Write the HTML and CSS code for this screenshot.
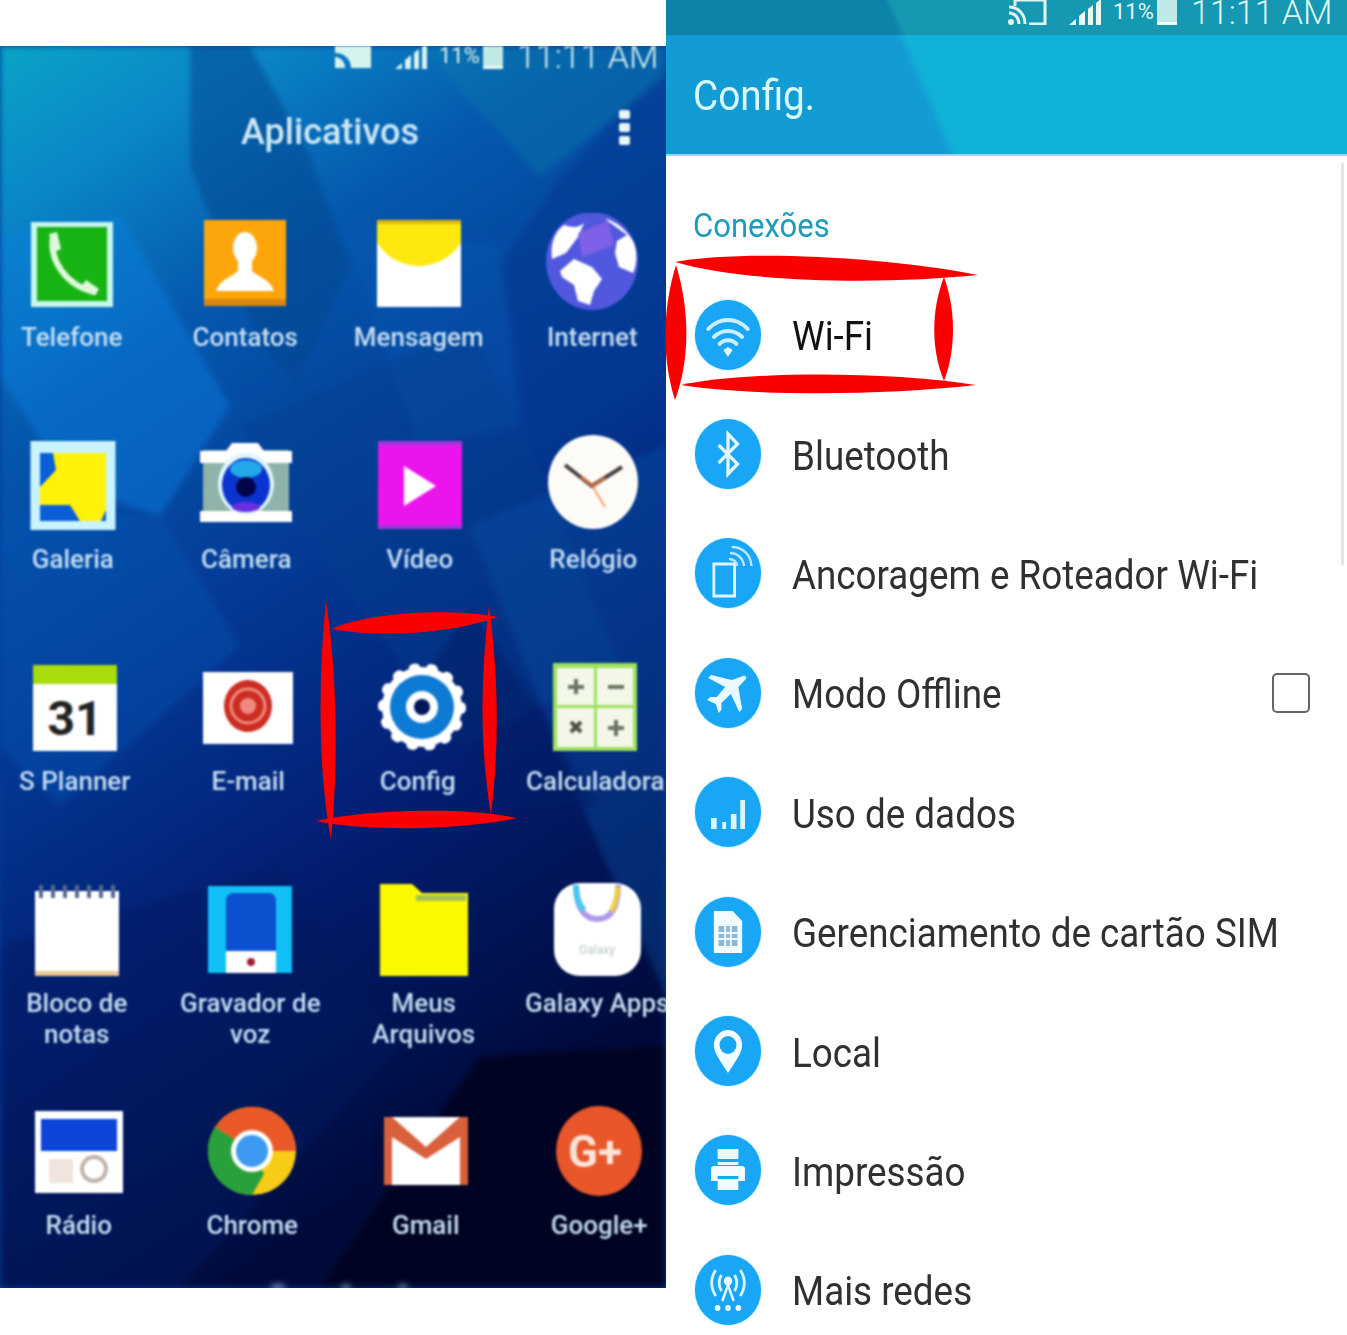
FILE: index.html
```html
<!DOCTYPE html>
<html lang="pt-BR">
<head>
<meta charset="utf-8">
<title>Config.</title>
<link rel="stylesheet" href="styles.css">
</head>
<body>
<div class="page">
  <section class="home">
    <svg class="wall" viewBox="0 0 666 1242" preserveAspectRatio="none" aria-hidden="true">
      <defs>
        <linearGradient id="wg" x1="0" y1="0" x2="0.35" y2="1">
          <stop offset="0" stop-color="#0aa4c6"/>
          <stop offset=".12" stop-color="#0a88c8"/>
          <stop offset=".28" stop-color="#0558ae"/>
          <stop offset=".5" stop-color="#043a96"/>
          <stop offset=".72" stop-color="#031f74"/>
          <stop offset="1" stop-color="#000a3a"/>
        </linearGradient>
      </defs>
      <rect width="666" height="1242" fill="url(#wg)"/>
      <polygon points="0,190 120,170 230,360 160,470 70,440 0,330" fill="#0a80e0" opacity=".45"/>
      <polygon points="190,0 250,0 310,110 350,220 300,330 380,420 260,300 190,120" fill="#04478f" opacity=".55"/>
      <polygon points="666,20 560,130 500,220 540,420 666,330" fill="#03388f" opacity=".55"/>
      <polygon points="420,0 666,0 666,30 540,130" fill="#0c78a8" opacity=".45"/>
      <polygon points="340,180 500,200 520,380 420,400" fill="#0a5eb8" opacity=".3"/>
      <polygon points="0,470 160,470 240,600 60,760 0,700" fill="#0654b4" opacity=".4"/>
      <polygon points="240,380 470,280 540,420 620,620 460,700 330,520" fill="#05408f" opacity=".4"/>
      <polygon points="470,480 666,400 666,950 590,780" fill="#0a52a8" opacity=".4"/>
      <polygon points="470,560 600,760 500,760 420,640" fill="#011f66" opacity=".55"/>
      <polygon points="0,900 280,820 400,1000 180,1242 0,1242" fill="#031a60" opacity=".45"/>
      <polygon points="320,1242 480,1010 666,1000 666,1242" fill="#000320" opacity=".9"/>
      <ellipse cx="278" cy="1242" rx="8" ry="3" fill="#cfe0ff"/>
      <ellipse cx="346" cy="1242" rx="5" ry="3" fill="#cfe0ff"/>
      <ellipse cx="403" cy="1242" rx="5" ry="3" fill="#cfe0ff"/>
    </svg>
    <div class="home-inner">
      <div class="status status-home">
        <svg class="st-cast" viewBox="0 0 40 26" aria-hidden="true"><path d="M2 1h36v24H18c0-9-7-15-16-15z" fill="#d6f4ee"/><path d="M2 14c6 0 10 5 10 11H2z" fill="#d6f4ee"/></svg>
        <svg class="st-signal" viewBox="0 0 34 26" aria-hidden="true"><path d="M0 26 7 20v6zM10 26V17l6-5v14zM19 26V10l5-4v20zM27 26V4l5-4v26z" fill="#d6f4ee"/></svg>
        <span class="st-pct">11%</span>
        <span class="st-batt"></span>
        <span class="st-time">11:11 AM</span>
      </div>
      <div class="title-row">
        <h1 class="title">Aplicativos</h1>
        <span class="dots"><i></i><i></i><i></i></span>
      </div>
      <div class="app-row r1">
        <div class="app">
          <svg viewBox="0 0 100 100"><rect x="9" y="9" width="82" height="85" fill="#c8f5ec"/><rect x="15" y="14" width="70" height="74" fill="#18b414"/><path d="M31 23C27 48 44 72 72 79" fill="none" stroke="#dff8dc" stroke-width="6" stroke-linecap="round"/><path d="M27 21l8-2 4 17-6 3zM60 73l4-6 13 9-4 6z" fill="#dff8dc"/></svg>
          <p>Telefone</p>
        </div>
        <div class="app">
          <svg viewBox="0 0 100 100"><rect x="9" y="7" width="82" height="86" fill="#fda60c"/><rect x="9" y="86" width="82" height="7" fill="#d98710"/><ellipse cx="50" cy="35" rx="12" ry="16" fill="#fff"/><path d="M43 48h14v10c6 6 18 8 22 20H21c4-12 16-14 22-20z" fill="#fff"/></svg>
          <p>Contatos</p>
        </div>
        <div class="app">
          <svg viewBox="0 0 100 100"><rect x="8" y="7" width="84" height="87" fill="#fff"/><path d="M8 7h84v22C84 44 66 53 50 53S16 44 8 29z" fill="#fde910"/><path d="M8 7h84v4H8z" fill="#e0b810"/></svg>
          <p>Mensagem</p>
        </div>
        <div class="app">
          <svg viewBox="0 0 100 100"><ellipse cx="50" cy="48" rx="46" ry="49" fill="#5258de"/><path d="M22 12c8 2 12 4 20-2l-6 14-12 16-14 6C8 28 14 18 22 12zM63 6l22 16-10 6-2 12 4 14 14 6c4-8 5-22 0-32-6-10-16-20-28-22zM18 58l14-12 18 8 10 12-8 12-4 14-12-4-4-16-12-8z" fill="#fff"/><path d="M36 20l30-12 6 24-10 4-22 8z" fill="#7f60e8"/></svg>
          <p>Internet</p>
        </div>
      </div>
      <div class="app-row r2">
        <div class="app">
          <svg viewBox="0 0 100 100"><rect x="7.5" y="6" width="85" height="89" fill="#c9f4ff"/><rect x="17" y="18" width="66" height="68" fill="#0a5fd8"/><path d="M30 18H83V75l-5 11H57L47 70H17V52L33 35z" fill="#fff20a"/></svg>
          <p>Galeria</p>
        </div>
        <div class="app">
          <svg viewBox="0 0 100 100"><rect x="7" y="15" width="86" height="70" fill="#8fb3a8"/><path d="M4 16h26l6-8h26l6 8h28v12H4zM4 76h92v11H4z" fill="#fff"/><ellipse cx="50" cy="49" rx="28" ry="31" fill="#dff6ff"/><ellipse cx="50" cy="50" rx="24" ry="27" fill="#0a34d0"/><ellipse cx="50" cy="34" rx="16" ry="9" fill="#20a8e8"/><circle cx="50" cy="52" r="10" fill="#01064a"/><ellipse cx="50" cy="72" rx="14" ry="5" fill="#6a30e0"/></svg>
          <p>Câmera</p>
        </div>
        <div class="app">
          <svg viewBox="0 0 100 100"><rect x="8" y="6" width="84" height="88" fill="#ec14ec"/><path d="M8 6h84v4H8zM8 90h84v4H8z" fill="#9c38d8"/><path d="M34 31l32 20-32 20z" fill="#fff"/></svg>
          <p>Vídeo</p>
        </div>
        <div class="app">
          <svg viewBox="0 0 100 100"><ellipse cx="50" cy="47" rx="45" ry="47" fill="#fdfbf6"/><path d="M22 30l27 21 30-19" fill="none" stroke="#4a4048" stroke-width="4"/><path d="M50 52l12 20" stroke="#f0a070" stroke-width="2"/><path d="M38 42l12 9 12-8" fill="none" stroke="#c87040" stroke-width="3"/></svg>
          <p>Relógio</p>
        </div>
      </div>
      <div class="app-row r3">
        <div class="app">
          <svg viewBox="0 0 100 100"><rect x="8" y="8" width="84" height="86" fill="#fff"/><rect x="8" y="8" width="84" height="19" fill="#a8dc0c"/><text x="50" y="78" class="cal">31</text></svg>
          <p>S Planner</p>
        </div>
        <div class="app">
          <svg viewBox="0 0 100 100"><rect x="5" y="15" width="90" height="72" fill="#fff"/><ellipse cx="50" cy="49" rx="24" ry="26" fill="#cc2d22"/><circle cx="50" cy="49" r="17" fill="none" stroke="#f08a80" stroke-width="3"/><circle cx="50" cy="49" r="8" fill="#ef8a80"/></svg>
          <p>E-mail</p>
        </div>
        <div class="app">
          <svg viewBox="0 0 100 100"><circle cx="50" cy="50" r="40" fill="#fff"/><circle cx="50" cy="50" r="39" fill="none" stroke="#fff" stroke-width="10" stroke-linecap="round" stroke-dasharray="2 15.5"/><circle cx="50" cy="50" r="32" fill="#0d7ad4"/><circle cx="50" cy="50" r="16" fill="#fff"/><circle cx="50" cy="50" r="8" fill="#02165c"/></svg>
          <p class="shift">Config</p>
        </div>
        <div class="app">
          <svg viewBox="0 0 100 100"><rect x="8" y="6" width="84" height="88" fill="#9ee060"/><rect x="12" y="11" width="37" height="37" fill="#f2f7e8"/><rect x="52" y="11" width="36" height="37" fill="#f2f7e8"/><rect x="12" y="51" width="37" height="39" fill="#f2f7e8"/><rect x="52" y="51" width="36" height="39" fill="#f2f7e8"/><path d="M31 22v15M23 30h16M63 30h16M63 71h16M71 63v16" stroke="#6a7460" stroke-width="4"/><path d="M26 65l10 10M36 65L26 75" stroke="#4a5044" stroke-width="4"/></svg>
          <p>Calculadora</p>
        </div>
      </div>
      <div class="app-row r4">
        <div class="app">
          <svg viewBox="0 0 100 100"><rect x="8" y="12" width="84" height="84" fill="#fff"/><rect x="8" y="92" width="84" height="5" fill="#ecc896"/><path d="M14 6v13M26 6v13M38 6v13M50 6v13M62 6v13M74 6v13M86 6v13" stroke="#556a90" stroke-width="4"/></svg>
          <p>Bloco de<br>notas</p>
        </div>
        <div class="app">
          <svg viewBox="0 0 100 100"><rect x="8" y="7" width="84" height="87" fill="#12c0f8"/><path d="M26 22q0-8 8-8h34q8 0 8 8v50H26z" fill="#0d50d0"/><rect x="26" y="72" width="50" height="22" fill="#fff"/><circle cx="51" cy="83" r="4" fill="#a02030"/></svg>
          <p>Gravador de<br>voz</p>
        </div>
        <div class="app">
          <svg viewBox="0 0 100 100"><path d="M6 5h32l10 9h46v83H6z" fill="#fcf800"/><rect x="42" y="16" width="50" height="6" fill="#a8c050"/></svg>
          <p>Meus<br>Arquivos</p>
        </div>
        <div class="app">
          <svg viewBox="0 0 100 100"><rect x="7" y="4" width="87" height="93" rx="26" fill="#fff"/><path d="M29 6c0 22 8 34 22 34s20-14 20-34" fill="none" stroke="#b098ea" stroke-width="6"/><path d="M29 6c0 12 3 20 8 25" fill="none" stroke="#48c8f0" stroke-width="6"/><path d="M64 32c4-6 6-14 7-24" fill="none" stroke="#f0d040" stroke-width="5"/><text x="50" y="75" class="gal">Galaxy</text></svg>
          <p>Galaxy Apps</p>
        </div>
      </div>
      <div class="app-row r5">
        <div class="app">
          <svg viewBox="0 0 100 100"><rect x="6" y="10" width="88" height="82" fill="#fff"/><rect x="12" y="18" width="76" height="32" fill="#0a45d8"/><rect x="20" y="58" width="24" height="24" fill="#f0e4dc"/><circle cx="65" cy="68" r="12" fill="none" stroke="#c0b4ac" stroke-width="4"/></svg>
          <p>Rádio</p>
        </div>
        <div class="app">
          <svg viewBox="0 0 100 100"><circle cx="50" cy="50" r="44" fill="#f8cc16"/><path d="M50 50 13 26A44 44 0 0 1 94 50H50z" fill="#ea5a28"/><path d="M50 50 13 26A44 44 0 0 0 50 94l12-21z" fill="#28a03c"/><circle cx="50" cy="50" r="21" fill="#fff"/><circle cx="50" cy="50" r="16" fill="#3c9af0"/></svg>
          <p>Chrome</p>
        </div>
        <div class="app">
          <svg viewBox="0 0 100 100"><rect x="8" y="16" width="84" height="68" fill="#fff"/><path d="M8 16h8l34 30 34-30h8v68H84V36L50 58 16 36v48H8z" fill="#d8603c"/></svg>
          <p>Gmail</p>
        </div>
        <div class="app">
          <svg viewBox="0 0 100 100"><ellipse cx="50" cy="50" rx="43" ry="45" fill="#e8562a"/><text x="46" y="66" class="gp">G+</text></svg>
          <p>Google+</p>
        </div>
      </div>
    </div>
  </section>

  <section class="settings">
    <div class="status status-set">
      <svg class="st-cast" viewBox="0 0 40 26" aria-hidden="true"><path d="M8 1h30v24H22M8 1v6" fill="none" stroke="#dff6f2" stroke-width="3"/><path d="M2 8c9 0 16 7 16 17M2 14c6 0 10 5 10 11" fill="none" stroke="#dff6f2" stroke-width="3"/><circle cx="4" cy="23" r="3" fill="#dff6f2"/></svg>
      <svg class="st-signal" viewBox="0 0 34 26" aria-hidden="true"><path d="M0 26 7 20v6zM10 26V17l6-5v14zM19 26V10l5-4v20zM27 26V4l5-4v26z" fill="#eafaf6"/></svg>
      <span class="st-pct">11%</span>
      <span class="st-batt"></span>
      <span class="st-time">11:11 AM</span>
    </div>
    <header class="appbar"><span class="appbar-title">Config.</span></header>
    <div class="sect-head"><span class="sect-text">Conexões</span></div>
    <ul class="list">
      <li class="item">
        <span class="dot"><svg viewBox="0 0 70 70" preserveAspectRatio="none"><path d="M14 29c12-12 30-12 42 0M20 37c9-8 21-8 30 0M26 44c5-5 13-5 18 0" fill="none" stroke="#cdeeff" stroke-width="4" stroke-linecap="round"/><path d="M35 57l-5-7 5-3 5 3z" fill="#e4f6ff"/></svg></span>
        <span class="item-text wifi">Wi-Fi</span>
      </li>
      <li class="item">
        <span class="dot"><svg viewBox="0 0 70 70" preserveAspectRatio="none"><path d="M25 26l20 19-10 10V15l10 10-20 19" fill="none" stroke="#e4f6ff" stroke-width="3.5"/></svg></span>
        <span class="item-text">Bluetooth</span>
      </li>
      <li class="item">
        <span class="dot"><svg viewBox="0 0 70 70" preserveAspectRatio="none"><rect x="20" y="26" width="22" height="32" fill="none" stroke="#dff4ff" stroke-width="3"/><path d="M37 15c8 0 14 5 15 13M39 9c11 0 20 7 21 19M36 21c5 0 8 3 9 7" fill="none" stroke="#bfe6ff" stroke-width="2.5"/></svg></span>
        <span class="item-text">Ancoragem e Roteador Wi-Fi</span>
      </li>
      <li class="item">
        <span class="dot"><svg viewBox="0 0 70 70" preserveAspectRatio="none"><path d="M51 18c3-1 4 1 3 3l-8 8 4 22-3 3-9-18-10 9v7l-3 3-3-9-9-4 3-3h7l9-10-18-9 3-3 22 5z" fill="#eaf8ff"/></svg></span>
        <span class="item-text">Modo Offline</span>
        <span class="check"></span>
      </li>
      <li class="item">
        <span class="dot"><svg viewBox="0 0 70 70" preserveAspectRatio="none"><path d="M17 41h6v11h-6zM29 45h4v7h-4zM38 37h6v15h-6zM48 23h5v29h-5z" fill="#dff4ff"/></svg></span>
        <span class="item-text">Uso de dados</span>
      </li>
      <li class="item">
        <span class="dot"><svg viewBox="0 0 70 70" preserveAspectRatio="none"><path d="M20 14h20l10 10v32H20z" fill="#f2fbff"/><rect x="25" y="29" width="20" height="20" fill="#8ab8d8"/><path d="M32 29v20M38 29v20M25 36h20M25 42h20" stroke="#f2fbff" stroke-width="2"/></svg></span>
        <span class="item-text">Gerenciamento de cartão SIM</span>
      </li>
      <li class="item">
        <span class="dot"><svg viewBox="0 0 70 70" preserveAspectRatio="none"><path d="M35 57C27 45 20 37 20 29a15 15 0 0 1 30 0c0 8-7 16-15 28z" fill="#f2fbff"/><circle cx="35" cy="29" r="9" fill="#18a6f5"/></svg></span>
        <span class="item-text">Local</span>
      </li>
      <li class="item">
        <span class="dot"><svg viewBox="0 0 70 70" preserveAspectRatio="none"><path d="M24 14h22v10H24zM24 27h22v3H24z" fill="#eaf8ff"/><path d="M17 34q0-3 3-3h30q3 0 3 3v12h-7v-5H24v5h-7z" fill="#f2fbff"/><rect x="24" y="44" width="22" height="11" fill="#f2fbff"/></svg></span>
        <span class="item-text">Impressão</span>
      </li>
      <li class="item">
        <span class="dot"><svg viewBox="0 0 70 70" preserveAspectRatio="none"><path d="M22 15c-6 9-6 17 0 26M48 15c6 9 6 17 0 26M28 20c-3 5-3 11 0 16M42 20c3 5 3 11 0 16" fill="none" stroke="#d8f2ff" stroke-width="3"/><circle cx="35" cy="26" r="4.5" fill="#eaf8ff"/><path d="M35 30l-6 16M35 30l6 16" stroke="#eaf8ff" stroke-width="2.5"/><circle cx="24" cy="53" r="3" fill="#eaf8ff"/><circle cx="35" cy="53" r="3" fill="#eaf8ff"/><circle cx="46" cy="53" r="3" fill="#eaf8ff"/></svg></span>
        <span class="item-text">Mais redes</span>
      </li>
    </ul>
    <span class="scrollbar"></span>
  </section>

  <svg class="marks" viewBox="0 0 1347 1335" aria-hidden="true">
    <path d="M331 629C370 612 450 608 498 617C450 634 380 638 331 629Z"/>
    <path d="M316 821C370 809 470 807 517 818C460 830 370 832 316 821Z"/>
    <path d="M326 600C318 680 318 770 331 840C338 770 338 680 326 600Z"/>
    <path d="M489 605C480 680 480 750 491 815C499 750 499 680 489 605Z"/>
    <path d="M675 262C740 250 880 256 978 275C890 284 750 284 675 262Z"/>
    <path d="M681 385C740 372 880 370 976 385C880 396 750 396 681 385Z"/>
    <path d="M676 265C662 310 662 360 675 400C690 360 690 310 676 265Z"/>
    <path d="M944 277C931 310 931 350 944 381C956 350 956 310 944 277Z"/>
  </svg>
</div>
</body>
</html>
```

FILE: styles.css
```css
* { box-sizing: border-box; }
html, body { margin: 0; padding: 0; background: #fff; }
.page {
  position: relative;
  display: flex;
  align-items: flex-start;
  width: 1347px;
  height: 1335px;
  overflow: hidden;
  font-family: Roboto, "Liberation Sans", sans-serif;
}

/* left phone */
.home {
  position: relative;
  flex: 0 0 666px;
  height: 1242px;
  margin-top: 46px;
  overflow: hidden;
  background: #043c98;
}
.wall {
  position: absolute;
  inset: 0;
  width: 100%;
  height: 100%;
  filter: blur(3px);
}
.home-inner {
  position: relative;
  filter: blur(1.3px);
}

.status {
  display: flex;
  justify-content: flex-end;
  align-items: flex-end;
  color: #dff6f2;
  overflow: hidden;
}
.status-home { height: 26px; padding: 0 3px 3px 0; }
.status-set {
  height: 35px;
  padding: 0 10px 10px 0;
  background: linear-gradient(66.6deg, #0d83aa 214px, #1798b2 221px);
}
.st-cast { width: 40px; height: 26px; margin-right: 22px; }
.st-signal { width: 34px; height: 26px; margin-right: 10px; }
.st-pct { font-size: 22px; line-height: 26px; width: 44px; }
.st-batt { width: 20px; height: 26px; background: #bfe9e6; border-bottom: 3px solid #f0fcfa; margin-right: 14px; }
.st-time { font-size: 34px; line-height: 26px; width: 146px; white-space: nowrap; font-weight: 300; }

.title-row {
  display: flex;
  align-items: center;
  height: 120px;
  padding: 0 36px 0 241px;
  margin-bottom: 21px;
}
.title {
  margin: 0;
  font-size: 36px;
  line-height: 44px;
  font-weight: 500;
  color: #cfe8f4;
}
.dots {
  display: flex;
  flex-direction: column;
  gap: 4px;
  margin-left: auto;
  margin-top: -10px;
}
.dots i { display: block; width: 11px; height: 9px; background: #e8f6f6; border-radius: 2px; }

.app-row { display: flex; height: 222px; }
.r1 { margin-left: -15px; }
.r2 { margin-left: -14px; }
.r3 { margin-left: -12px; }
.r4 { margin-left: -10px; }
.r5 { margin-left: -8px; }
.app {
  flex: 0 0 173.5px;
  display: flex;
  flex-direction: column;
  align-items: center;
}
.app svg { display: block; width: 100px; height: 100px; flex: none; }
.app p {
  margin: 9px -30px 0;
  font-size: 26px;
  line-height: 31px;
  font-weight: 500;
  text-align: center;
  white-space: nowrap;
  color: #c6dff2;
}
.app p.shift { margin-left: -38px; }
.cal { font: 700 48px Roboto, sans-serif; fill: #222; text-anchor: middle; }
.gal { font: 12px Roboto, sans-serif; fill: #b8c8c8; text-anchor: middle; }
.gp { font: 700 44px Roboto, sans-serif; fill: #fbe4d8; text-anchor: middle; }

/* right phone */
.settings {
  position: relative;
  flex: 0 0 681px;
  height: 1335px;
  overflow: hidden;
  background: #fff;
}
.appbar {
  display: flex;
  align-items: center;
  height: 121px;
  padding-left: 27px;
  background: linear-gradient(66.6deg, #139bd4 258px, #10b2d8 268px);
  border-bottom: 2px solid #7fe0f0;
}
.appbar-title {
  display: inline-block;
  font-size: 43px;
  line-height: 52px;
  color: #d6fbfa;
  transform: scaleX(.9);
  transform-origin: left center;
  filter: blur(.5px);
}
.sect-head {
  display: flex;
  align-items: center;
  height: 119px;
  padding: 41px 0 21px 27px;
}
.sect-text {
  font-size: 33px;
  line-height: 40px;
  color: #1b9cbc;
  transform: scaleX(.94);
  transform-origin: left center;
  filter: blur(.5px);
}
.list { list-style: none; margin: 0; padding: 0; }
.item {
  display: flex;
  align-items: center;
  height: 119.4px;
  padding: 0 37px 0 29px;
}
.dot {
  flex: none;
  width: 66px;
  height: 70px;
  margin-right: 31px;
  border-radius: 50%;
  background: #18a6f5;
  box-shadow: 0 0 2px #6fd0ff;
}
.dot svg { display: block; width: 66px; height: 70px; }
.item-text {
  padding-top: 5px;
  font-size: 40px;
  line-height: 48px;
  color: #303030;
  white-space: nowrap;
  transform: scaleX(.92);
  transform-origin: left center;
  filter: blur(.45px);
}
.wifi { color: #111; }
.check {
  flex: none;
  width: 38px;
  height: 40px;
  margin-left: auto;
  border: 2px solid #666;
  border-radius: 5px;
}
.scrollbar {
  position: absolute;
  top: 163px;
  right: 3px;
  width: 3px;
  height: 402px;
  background: #dfe6ea;
}

.marks {
  position: absolute;
  inset: 0;
  width: 1347px;
  height: 1335px;
  fill: #fa0000;
  pointer-events: none;
}
```
